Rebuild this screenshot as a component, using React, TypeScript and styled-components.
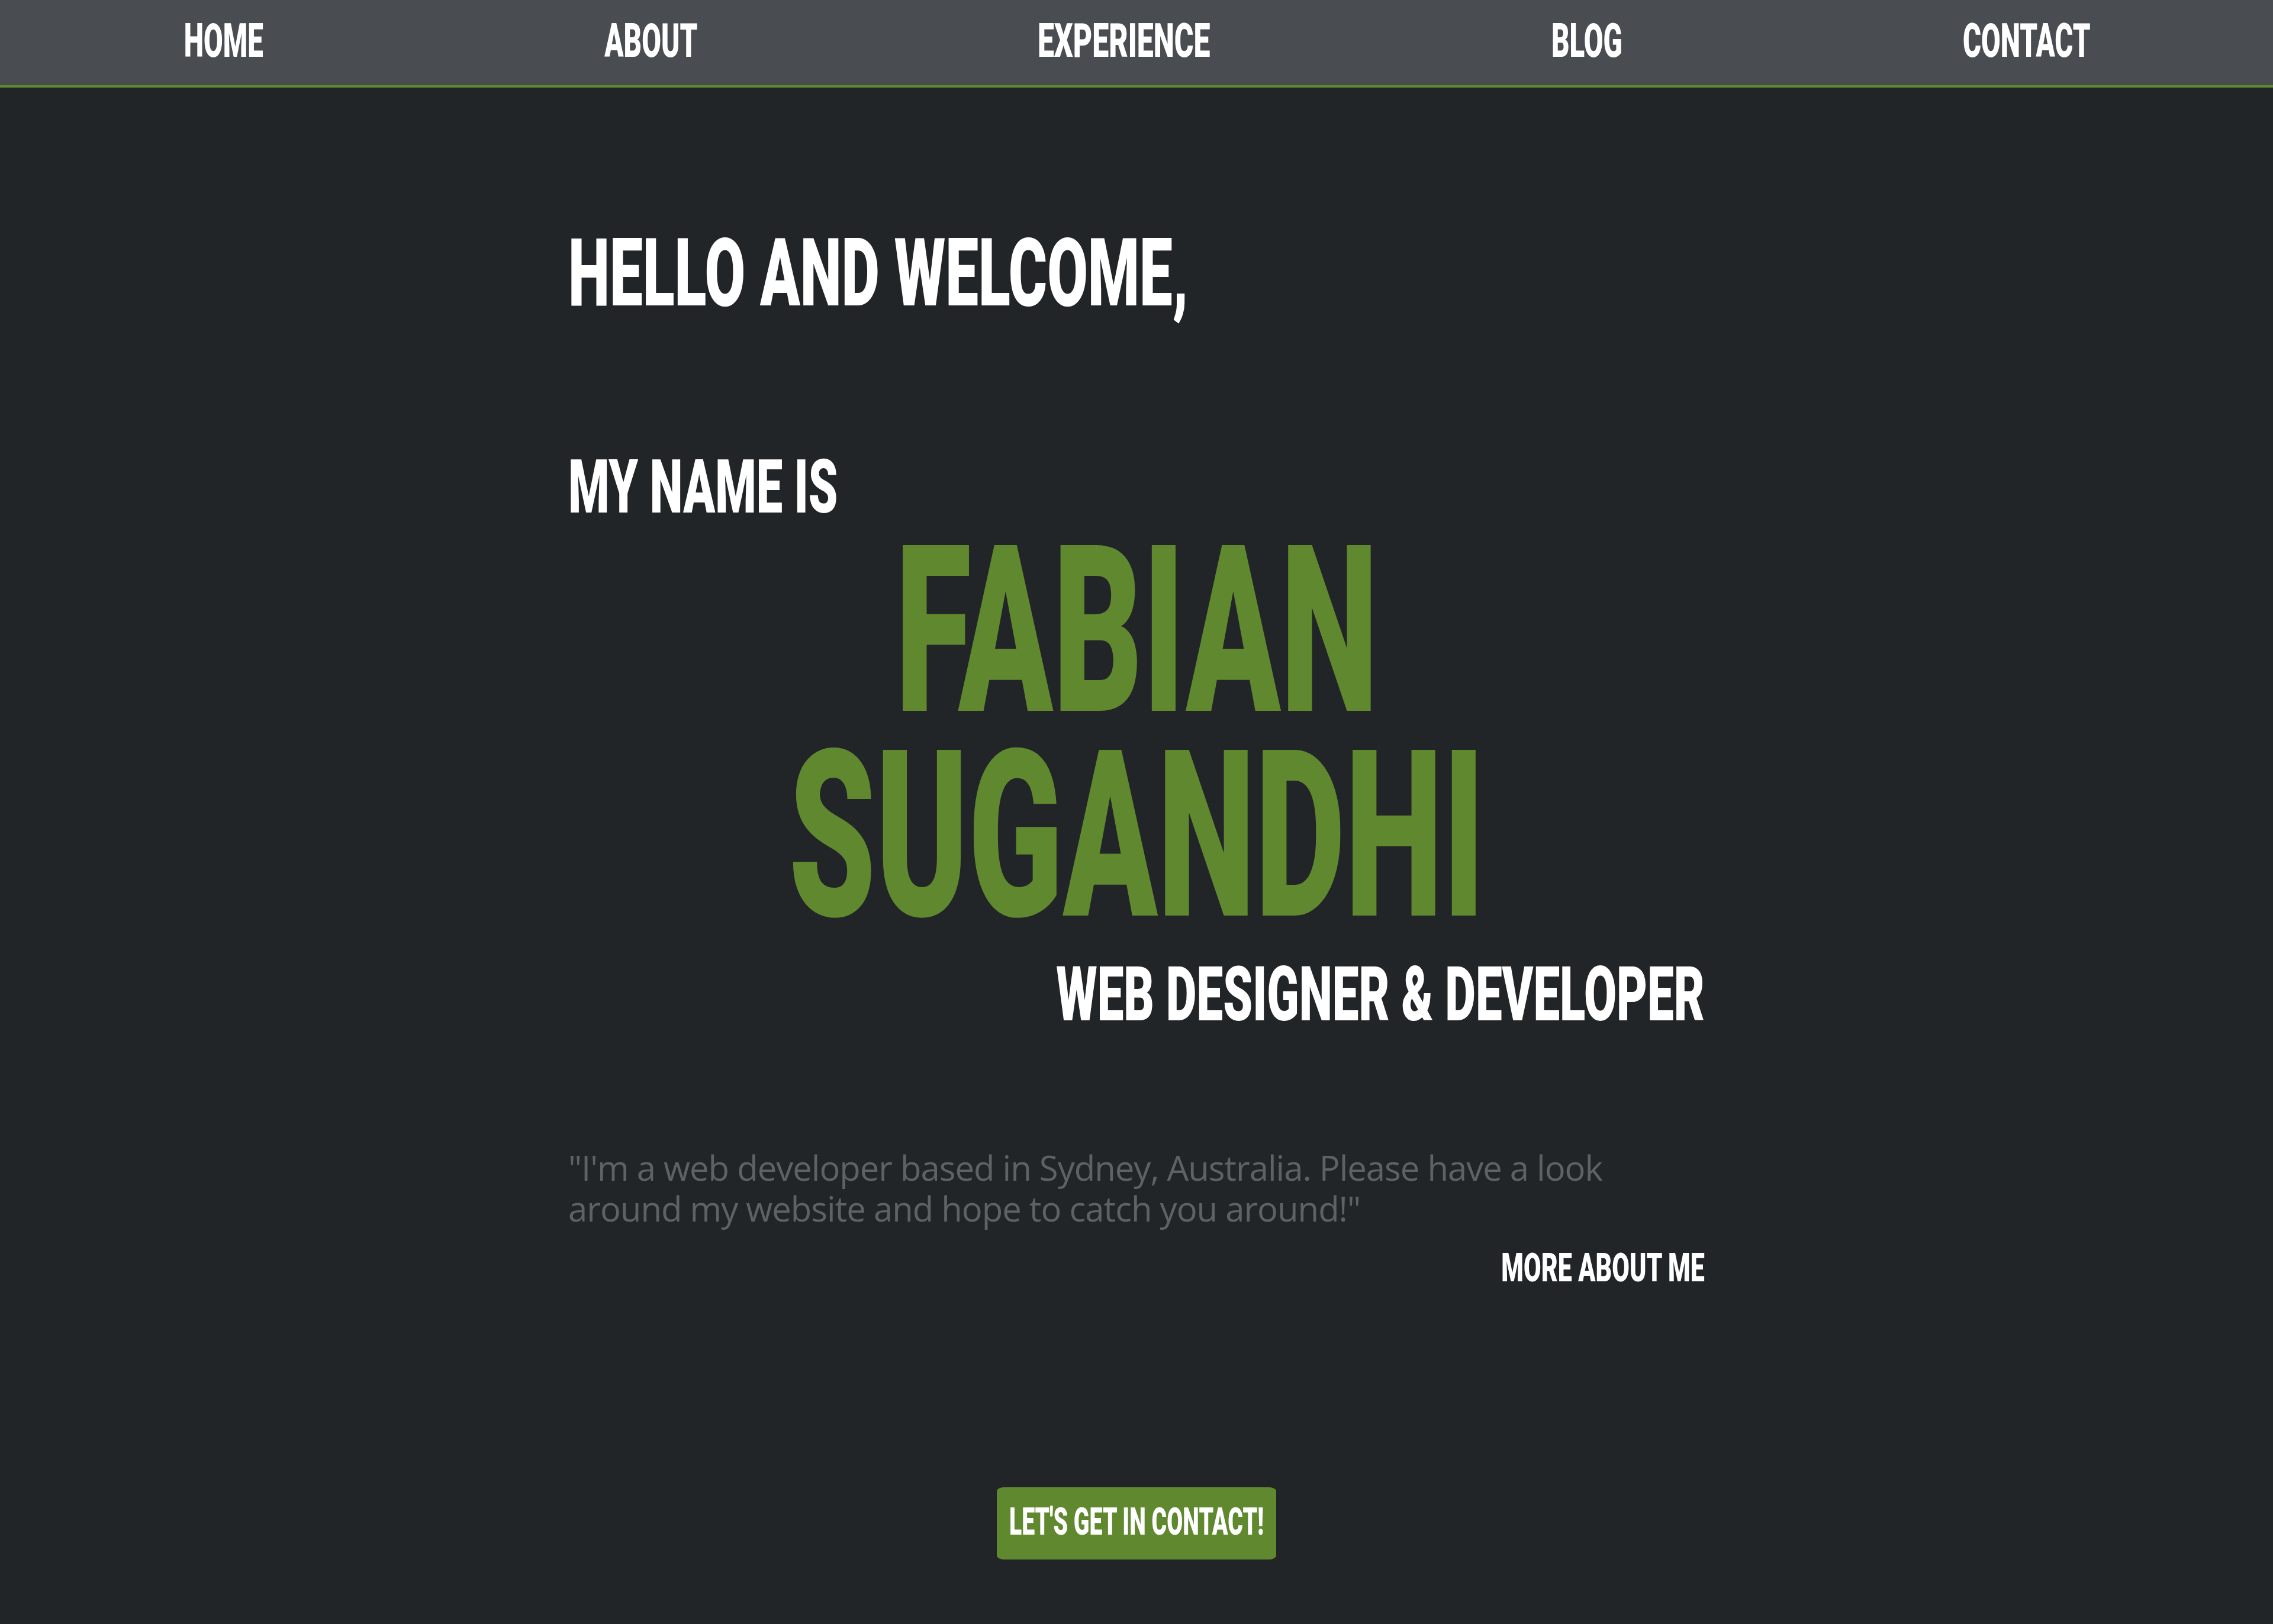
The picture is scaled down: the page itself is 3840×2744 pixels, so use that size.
import React from 'react';
import styled, { createGlobalStyle } from 'styled-components';

const GREEN = '#60882f';
const DISPLAY = `'Roboto', 'Liberation Sans', sans-serif`;

const GlobalStyle = createGlobalStyle`
  html, body {
    margin: 0;
    padding: 0;
    background: #222528;
  }
  #root {
    min-height: 2744px;
    background: #222528;
  }
`;

const navItems = [
  { label: 'HOME', width: 137, sx: 0.6 },
  { label: 'ABOUT', width: 157, sx: 0.6 },
  { label: 'EXPERIENCE', width: 292, sx: 0.632 },
  { label: 'BLOG', width: 123, sx: 0.6 },
  { label: 'CONTACT', width: 213, sx: 0.6 },
];

export default function App() {
  return (
    <>
      <GlobalStyle />
      <Page>
        <Nav>
          {navItems.map(item => (
            <NavItem key={item.label} href="#" $width={item.width}>
              <Squeeze $sx={item.sx} $origin="center">{item.label}</Squeeze>
            </NavItem>
          ))}
        </Nav>

        <Hero>
          <Greeting>
            <Squeeze $sx={0.626} $origin="left">HELLO AND WELCOME,</Squeeze>
          </Greeting>
          <Intro>
            <Squeeze $sx={0.624} $origin="left">MY NAME IS</Squeeze>
          </Intro>
          <Name>
            <Squeeze $sx={0.596} $origin="center">
              FABIAN
              <br />
              SUGANDHI
            </Squeeze>
          </Name>
          <Role>
            <Squeeze $sx={0.624} $origin="right">WEB DESIGNER &amp; DEVELOPER</Squeeze>
          </Role>
          <Blurb>
            "I'm a web developer based in Sydney, Australia. Please have a look around my
            website and hope to catch you around!"
          </Blurb>
          <MoreLink href="#">
            <Squeeze $sx={0.641} $origin="right">MORE ABOUT ME</Squeeze>
          </MoreLink>
          <ButtonRow>
            <ContactButton>
              <Squeeze $sx={0.604} $origin="center">LET'S GET IN CONTACT!</Squeeze>
            </ContactButton>
          </ButtonRow>
        </Hero>
      </Page>
    </>
  );
}

// Styled Components
const Page = styled.div`
  min-height: 2744px;
  background: #222528;
  display: flex;
  flex-direction: column;
`;

const Squeeze = styled.span<{ $sx: number; $origin: string }>`
  display: inline-block;
  white-space: nowrap;
  transform: scaleX(${p => p.$sx});
  transform-origin: ${p => p.$origin};
`;

const Nav = styled.nav`
  height: 144px;
  box-sizing: content-box;
  background: #494c51;
  border-bottom: 4px solid ${GREEN};
  display: flex;
  justify-content: space-around;
  align-items: center;
  padding: 0 22px;
`;

const NavItem = styled.a<{ $width: number }>`
  width: ${p => p.$width}px;
  display: flex;
  justify-content: center;
  padding-bottom: 6px;
  font-family: ${DISPLAY};
  font-weight: 900;
  font-size: 79px;
  line-height: 1;
  color: #ffffff;
  text-decoration: none;
`;

const Hero = styled.main`
  width: 1920px;
  margin: 0 auto;
  padding: 234px 0 108px;
  display: flex;
  flex-direction: column;
`;

const Heading = styled.h2`
  margin: 0;
  font-family: ${DISPLAY};
  font-weight: 900;
  line-height: 1;
  color: #ffffff;
`;

const Greeting = styled(Heading)`
  font-size: 159px;
`;

const Intro = styled(Heading)`
  font-size: 127px;
  margin-top: 218px;
`;

const Name = styled.h1`
  margin: 7px 0 0;
  display: flex;
  justify-content: center;
  font-family: ${DISPLAY};
  font-weight: 900;
  font-size: 394px;
  line-height: 346px;
  color: ${GREEN};
  text-align: center;
`;

const Role = styled(Heading)`
  font-size: 128px;
  margin-top: 31px;
  text-align: right;
`;

const Blurb = styled.p`
  margin: 194px 0 0;
  font-family: 'Open Sans', 'Noto Sans', sans-serif;
  font-weight: 400;
  font-size: 58px;
  line-height: 69px;
  letter-spacing: -1px;
  color: #5e6166;
`;

const MoreLink = styled.a`
  align-self: flex-end;
  margin-top: 33px;
  font-family: ${DISPLAY};
  font-weight: 900;
  font-size: 67px;
  line-height: 1;
  color: #ffffff;
  text-decoration: none;
`;

const ButtonRow = styled.div`
  display: flex;
  justify-content: center;
  margin-top: 337px;
`;

const ContactButton = styled.button`
  width: 472px;
  height: 122px;
  border: none;
  border-radius: 12px / 7px;
  background: ${GREEN};
  color: #ffffff;
  display: flex;
  align-items: center;
  justify-content: center;
  padding: 0 0 6px;
  font-family: ${DISPLAY};
  font-weight: 900;
  font-size: 65px;
  line-height: 1;
  cursor: pointer;
`;
